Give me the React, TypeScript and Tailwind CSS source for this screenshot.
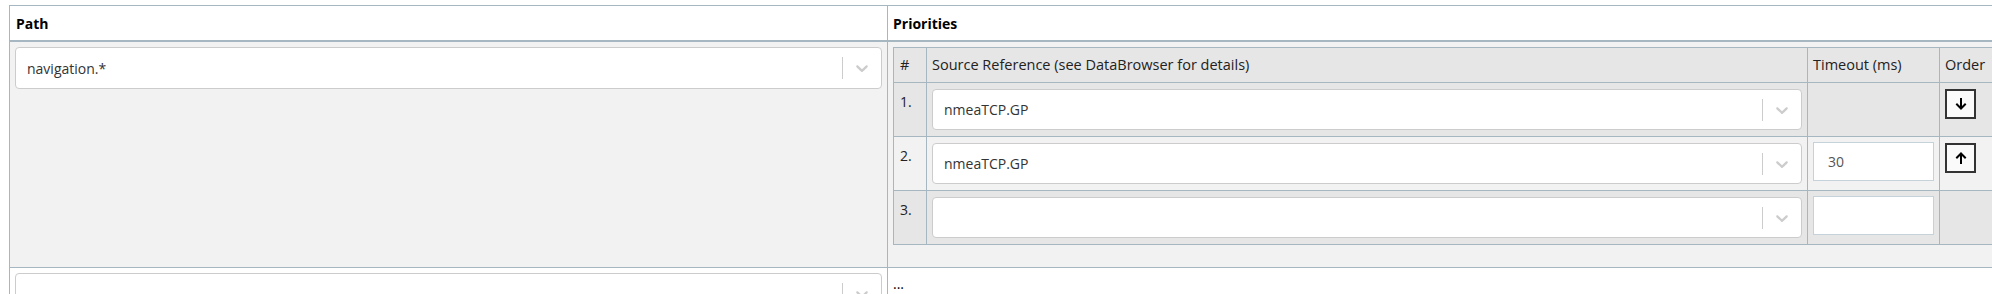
import React from "react";

const FONT = { fontFamily: '"Open Sans", "Noto Sans", sans-serif' };

function Chevron() {
  return (
    <svg viewBox="0 0 20 20" width="20" height="20" fill="#cccccc">
      <path d="M4.516 7.548c0.436-0.446 1.043-0.481 1.576 0l3.908 3.747 3.908-3.747c0.533-0.481 1.141-0.446 1.574 0 0.436 0.445 0.408 1.197 0 1.615-0.406 0.418-4.695 4.502-4.695 4.502-0.217 0.223-0.502 0.335-0.787 0.335s-0.57-0.112-0.789-0.335c0 0-4.287-4.084-4.695-4.502s-0.436-1.17 0-1.615z" />
    </svg>
  );
}

function Select({ value, h = "h-[41px]" }: { value?: string; h?: string }) {
  return (
    <div className={`flex ${h} w-full items-center rounded-[4px] border border-[#cccccc] bg-white`}>
      <div className="flex-1 pl-[11px] text-[14px] text-[#333333]">{value}</div>
      <div className="h-[22px] w-px bg-[#cccccc]" />
      <div className="flex w-[38px] items-center justify-center">
        <Chevron />
      </div>
    </div>
  );
}

function Arrow({ up }: { up?: boolean }) {
  return (
    <svg viewBox="0 0 12 12" width="12" height="12" fill="none" stroke="#000" strokeWidth="2" strokeLinecap="square">
      {up ? (
        <path d="M6 11V2 M2 5.5 L6 1.5 L10 5.5" />
      ) : (
        <path d="M6 1V10 M2 6.5 L6 10.5 L10 6.5" />
      )}
    </svg>
  );
}

function OrderBtn({ up }: { up?: boolean }) {
  return (
    <div className="flex h-[30px] w-[31px] items-center justify-center border-2 border-[#333333] bg-[#fafafa]">
      <Arrow up={up} />
    </div>
  );
}

function TimeoutInput({ value }: { value?: string }) {
  return (
    <div className="flex h-[39px] w-full items-center border border-[#c5d2d9] bg-white pl-[14px] text-[14px] text-[#555555]">
      {value}
    </div>
  );
}

const cell = "border-r border-b border-[#a7b7c1]";

export default function App() {
  const rows: {
    n: string;
    bg: string;
    value?: string;
    timeout: boolean;
    tv?: string;
    order?: "up" | "down";
  }[] = [
    { n: "1.", bg: "bg-[#e6e6e6]", value: "nmeaTCP.GP", timeout: false, order: "down" },
    { n: "2.", bg: "bg-[#f2f2f2]", value: "nmeaTCP.GP", timeout: true, tv: "30", order: "up" },
    { n: "3.", bg: "bg-[#e6e6e6]", value: "", timeout: true, tv: "" },
  ];
  return (
    <div className="h-[294px] w-[1992px] overflow-hidden bg-white pl-[9px] pt-[5px] text-black" style={FONT}>
      <div className="w-[2100px] border-l border-t border-[#a7b7c1]">
        {/* header */}
        <div className="flex h-[36px] border-b-2 border-[#a7b7c1] bg-white">
          <div className="flex w-[878px] items-center border-r border-[#a7b7c1] pl-[6px] text-[14px] font-bold">
            Path
          </div>
          <div className="flex flex-1 items-center pl-[5px] text-[14px] font-bold">Priorities</div>
        </div>
        {/* body row 1 */}
        <div className="flex border-b border-[#a7b7c1] bg-[#f2f2f2]">
          <div className="w-[878px] border-r border-[#a7b7c1] px-[5px] pt-[5px]">
            <Select value="navigation.*" h="h-[42px]" />
          </div>
          <div className="flex-1 pb-[22px] pl-[5px] pt-[5px]">
            <div className="w-[1100px] border-l border-t border-[#a7b7c1] text-[14px] text-[#222222]">
              <div className="grid grid-cols-[33px_881px_132px_100px] bg-[#e6e6e6] text-[14.5px]">
                <div className={`${cell} flex h-[35px] items-center pl-[6px]`}>#</div>
                <div className={`${cell} flex h-[35px] items-center pl-[5px]`}>
                  Source Reference (see DataBrowser for details)
                </div>
                <div className={`${cell} flex h-[35px] items-center pl-[5px]`}>Timeout (ms)</div>
                <div className={`${cell} flex h-[35px] items-center pl-[5px]`}>Order</div>
              </div>
              {rows.map((r) => (
                <div key={r.n} className={`grid grid-cols-[33px_881px_132px_100px] ${r.bg}`}>
                  <div className={`${cell} h-[54px] pl-[6px] pt-[8px]`}>{r.n}</div>
                  <div className={`${cell} h-[54px] px-[5px] pt-[6px]`}>
                    <Select value={r.value} />
                  </div>
                  <div className={`${cell} h-[54px] px-[5px] pt-[5px]`}>
                    {r.timeout ? <TimeoutInput value={r.tv} /> : null}
                  </div>
                  <div className={`${cell} h-[54px] pl-[5px] pt-[6px]`}>
                    {r.order ? <OrderBtn up={r.order === "up"} /> : null}
                  </div>
                </div>
              ))}
            </div>
          </div>
        </div>
        {/* body row 2 */}
        <div className="flex h-[60px] bg-white">
          <div className="w-[878px] border-r border-[#a7b7c1] px-[5px] pt-[5px]">
            <Select value="" h="h-[42px]" />
          </div>
          <div className="flex-1 pl-[5px] pt-[6px] text-[14px] leading-[19px]">...</div>
        </div>
      </div>
    </div>
  );
}
